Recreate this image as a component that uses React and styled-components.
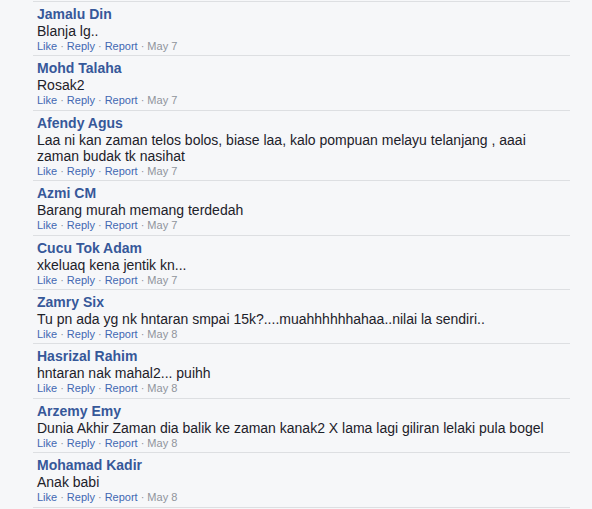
import React from 'react';
import styled, { createGlobalStyle } from 'styled-components';

const GlobalStyle = createGlobalStyle`
  html, body {
    margin: 0;
    padding: 0;
    background: #f6f7f9;
  }
  body {
    font-family: Arial, "Liberation Sans", Helvetica, sans-serif;
  }
`;

const StyledPage = styled.div`
  width: 592px;
  height: 509px;
  overflow: hidden;
  background: #f6f7f9;
`;

const CommentList = styled.ul`
  list-style: none;
  margin: 1px 0 0 33px;
  padding: 0;
  width: 537px;
  border-bottom: 1px solid #dddfe2;
`;

const CommentRow = styled.li`
  border-top: 1px solid #dddfe2;
  padding: 3px 0 2.4px 4px;
`;

const Author = styled.a`
  display: block;
  color: #365899;
  font-size: 14px;
  font-weight: bold;
  line-height: 18px;
  text-decoration: none;
`;

const Body = styled.div`
  color: #1d2129;
  font-size: 14px;
  line-height: 16px;
  white-space: pre-wrap;
`;

const Actions = styled.div`
  font-size: 11px;
  line-height: 14px;
  color: #90949c;

  a {
    color: #4267b2;
    text-decoration: none;
  }

  .dot {
    margin: 0 3px;
  }
`;

const comments = [
  { name: 'Jamalu Din', text: 'Blanja lg..', date: 'May 7' },
  { name: 'Mohd Talaha', text: 'Rosak2', date: 'May 7' },
  {
    name: 'Afendy Agus',
    text: 'Laa ni kan zaman telos bolos, biase laa, kalo pompuan melayu telanjang , aaai zaman budak tk nasihat',
    date: 'May 7',
  },
  { name: 'Azmi CM', text: 'Barang murah memang terdedah', date: 'May 7' },
  { name: 'Cucu Tok Adam', text: 'xkeluaq kena jentik kn...', date: 'May 7' },
  { name: 'Zamry Six', text: 'Tu pn ada yg nk hntaran smpai 15k?....muahhhhhhahaa..nilai la sendiri..', date: 'May 8' },
  { name: 'Hasrizal Rahim', text: 'hntaran nak mahal2... puihh', date: 'May 8' },
  {
    name: 'Arzemy Emy',
    text: 'Dunia Akhir Zaman dia balik ke zaman kanak2 X lama lagi giliran lelaki pula bogel',
    date: 'May 8',
  },
  { name: 'Mohamad Kadir', text: 'Anak babi', date: 'May 8' },
];

const Comment = ({ name, text, date }) => (
  <CommentRow>
    <Author href="#">{name}</Author>
    <Body>{text}</Body>
    <Actions>
      <a href="#">Like</a>
      <span className="dot">·</span>
      <a href="#">Reply</a>
      <span className="dot">·</span>
      <a href="#">Report</a>
      <span className="dot">·</span>
      <span>{date}</span>
    </Actions>
  </CommentRow>
);

const App = () => (
  <StyledPage>
    <GlobalStyle />
    <CommentList>
      {comments.map((c, i) => (
        <Comment key={i} {...c} />
      ))}
    </CommentList>
  </StyledPage>
);

export default App;
